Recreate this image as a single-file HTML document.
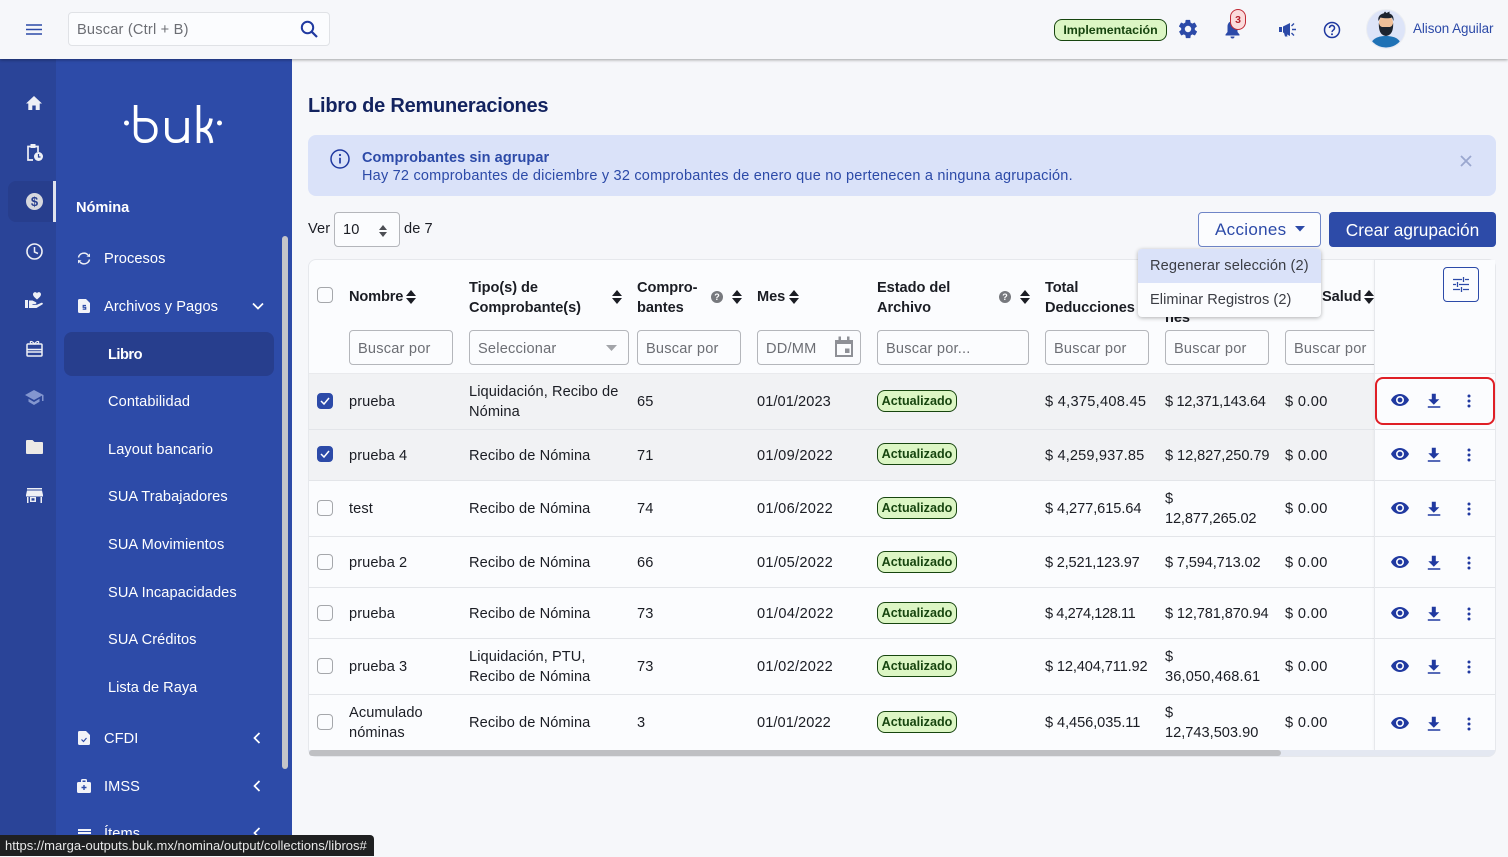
<!DOCTYPE html>
<html lang="es"><head><meta charset="utf-8"><title>Libro de Remuneraciones</title>
<style>
*{box-sizing:border-box}
html,body{margin:0;padding:0;width:1508px;height:856px;overflow:hidden;background:#f6f7fa;font-family:"Liberation Sans",sans-serif;color:#1b1d24;font-size:14.6px}
.a{position:absolute}
.t{position:absolute;white-space:nowrap;line-height:20px;margin-top:1px;letter-spacing:.08px}
.w{color:#fff}
.b{font-weight:700;letter-spacing:-.05px}
.in{position:absolute;top:330px;height:35px;border:1px solid #b4b6bb;border-radius:4px;background:#fbfcfe;color:#6c6e74;padding:8px 8px 0;line-height:20px;white-space:nowrap;letter-spacing:.2px}
.row{position:absolute;left:309px;width:1066px;border-bottom:1px solid #e3e5e9}
.cb{position:absolute;left:317px;width:16px;height:16px;border:1px solid #a5a7ab;border-radius:4px;background:#fbfcfe}
.cb.on{background:#2c4aa8;border-color:#2c4aa8}
.tag{position:absolute;left:877px;width:80px;height:22px;border:1px solid #17450f;border-radius:8px;background:#dcf6c4;color:#17450f;font-weight:700;font-size:12.6px;line-height:20px;text-align:center}
.sort{position:absolute;width:10px;height:14px}
.ic{position:absolute}
</style></head><body>

<!-- main background -->
<div class="a" style="left:292px;top:59px;width:1216px;height:797px;background:#f6f7fa"></div>

<!-- top bar -->
<div class="a" style="left:0;top:0;width:1508px;height:59px;background:#f6f7fa;box-shadow:0 1px 3px rgba(0,0,0,.35);z-index:5">
  <svg class="ic" style="left:26px;top:24px" width="16" height="11" viewBox="0 0 16 11"><path d="M0 1h16M0 5.500h16M0 10h16" stroke="#2c4aa8" stroke-width="1.500"/></svg>
  <div class="a" style="left:68px;top:12px;width:262px;height:34px;border:1px solid #e0e2e6;border-radius:4px;background:#fbfcfe"></div>
  <div class="t" style="left:77px;top:19px;color:#6c6e74;letter-spacing:.2px">Buscar (Ctrl + B)</div>
  <svg class="ic" style="left:300px;top:20px" width="18" height="18" viewBox="0 0 18 18"><circle cx="7.500" cy="7.500" r="5.700" fill="none" stroke="#2039a0" stroke-width="2"/><path d="M11.800 11.800L17 17" stroke="#2039a0" stroke-width="2.200"/></svg>

  <div class="a" style="left:1054px;top:19px;width:113px;height:22px;border:1px solid #17450f;border-radius:8px;background:#dcf6c4;color:#17450f;font-weight:700;font-size:12.4px;line-height:20px;text-align:center">Implementación</div>
  <svg class="ic" style="left:1177px;top:18px" width="22" height="22" viewBox="0 0 24 24"><path fill="#2c4aa8" d="M19.400 13c.1-.3.1-.7.1-1s0-.7-.1-1l2.100-1.600c.2-.2.2-.4.100-.6l-2-3.500c-.1-.2-.4-.3-.6-.2l-2.500 1c-.5-.4-1.100-.7-1.700-1l-.4-2.600c0-.3-.2-.5-.5-.5h-4c-.3 0-.5.2-.5.500l-.4 2.600c-.6.300-1.200.6-1.700 1l-2.500-1c-.2-.1-.5 0-.6.2l-2 3.500c-.1.200-.1.400.1.600L4.600 11c-.1.300-.1.700-.1 1s0 .7.100 1l-2.100 1.600c-.2.200-.2.400-.1.600l2 3.500c.1.200.4.300.6.200l2.500-1c.5.400 1.100.7 1.700 1l.4 2.600c0 .3.200.5.500.5h4c.3 0 .5-.2.5-.5l.4-2.600c.6-.3 1.200-.6 1.700-1l2.500 1c.2.100.5 0 .6-.2l2-3.500c.1-.2.100-.4-.1-.6L19.400 13zM12 15.500a3.500 3.500 0 1 1 0-7 3.500 3.500 0 0 1 0 7z"/></svg>
  <svg class="ic" style="left:1224px;top:20px" width="17" height="19" viewBox="0 0 17 19"><path fill="#2c4aa8" d="M8.500 1c-3 0-5 2.500-5 5.500V12L1.500 14.500v1h14v-1L13.500 12V6.500c0-3-2-5.500-5-5.500zM6.500 16.500a2 2 0 0 0 4 0z"/></svg>
  <div class="a" style="left:1230px;top:9px;width:16px;height:21px;border:1px solid #c02a35;border-radius:8px;background:#fbdcdc;color:#b3202c;font-weight:700;font-size:10.500px;line-height:20px;text-align:center">3</div>
  <svg class="ic" style="left:1279px;top:22px" width="18" height="15" viewBox="0 0 18 15"><path fill="#2c4aa8" d="M0 5h3v5H0zM4 4.500L11 1v13L4 10.500zM5 11h2.500l1 3.500H6z"/><path d="M13 7.500h4M12.500 4l2.500-2.500M12.500 11l2.500 2.500" stroke="#2c4aa8" stroke-width="1.400" fill="none"/></svg>
  <svg class="ic" style="left:1323px;top:21px" width="18" height="18" viewBox="0 0 18 18"><circle cx="9" cy="9" r="7.500" fill="none" stroke="#2039a0" stroke-width="1.500"/><path d="M6.500 7a2.500 2.500 0 1 1 3.800 2.100c-.9.600-1.300 1-1.300 2" fill="none" stroke="#2039a0" stroke-width="1.500"/><circle cx="9" cy="13.200" r="1" fill="#2039a0"/></svg>
  <svg class="ic" style="left:1366px;top:9px" width="40" height="40" viewBox="0 0 40 40"><circle cx="20" cy="20" r="19.500" fill="#dde4f8" stroke="#eceef2"/><clipPath id="c"><circle cx="20" cy="20" r="18.500"/></clipPath><g clip-path="url(#c)"><path fill="#1f72b5" d="M4 40c0-9 6-13 16-13s16 4 16 13z"/><ellipse cx="20" cy="14" rx="7" ry="8" fill="#f0c09a"/><path fill="#1d2430" d="M12.800 14c0 7 1 12 7.200 13 6.200-1 7.200-6 7.200-13-1 3-2 4-4 4h-6.400c-2 0-3-1-4-4z"/><path fill="#1d2430" d="M12.500 12c-1-4 1.500-7 5-7.500l1.500-2 1.500 1.500 3-1.500 0 2c3 1 4.500 3.500 4 7.500l-1.500-3.500c-3 1-7 1-11.500 0z"/></g></svg>
  <div class="t" style="left:1413px;top:18px;color:#2c4aa8;font-size:13.400px;letter-spacing:-.05px">Alison Aguilar</div>
</div>

<!-- rail -->
<div class="a" style="left:0;top:59px;width:56px;height:797px;background:#2a4498"></div>
<div class="a" style="left:56px;top:59px;width:236px;height:797px;background:#2d4ba8"></div>
<div class="a" style="left:8px;top:181px;width:48px;height:41px;background:#273e8d;border-radius:8px 0 0 8px"></div>
<div class="a" style="left:53px;top:181px;width:3px;height:41px;background:#dfe3ee"></div>

<svg class="ic" style="left:26px;top:95px" width="16" height="16" viewBox="0 0 16 16"><path fill="#eef0f6" d="M8 1L0 8.500h2.300V15h4V10.500h3.400V15h4V8.500H16z"/></svg>
<svg class="ic" style="left:26px;top:143px" width="18" height="19" viewBox="0 0 18 19"><path fill="none" stroke="#eef0f6" stroke-width="1.700" d="M7 17H2V3.500h10V9"/><rect x="4.500" y="1" width="5" height="4" fill="#eef0f6"/><circle cx="12.500" cy="13.500" r="4.500" fill="#eef0f6"/><path d="M12.500 11v3h2" stroke="#2a4498" stroke-width="1.200" fill="none"/></svg>
<svg class="ic" style="left:26px;top:193px" width="17" height="17" viewBox="0 0 17 17"><circle cx="8.500" cy="8.500" r="8.500" fill="#d6d8de"/></svg>
<div class="t b" style="left:26px;top:191px;width:17px;text-align:center;color:#273e8d;font-size:13px">$</div>
<svg class="ic" style="left:26px;top:243px" width="17" height="17" viewBox="0 0 17 17"><circle cx="8.500" cy="8.500" r="7.500" fill="none" stroke="#eef0f6" stroke-width="1.600"/><path d="M8.500 4v5l3.500 1.500" fill="none" stroke="#eef0f6" stroke-width="1.500"/></svg>
<svg class="ic" style="left:25px;top:291px" width="18" height="18" viewBox="0 0 18 18"><path fill="#eef0f6" d="M12 8.500C9.500 6.500 8 5 8 3.300 8 1 11 .200 12 2.300 13 .200 16 1 16 3.300 16 5 14.500 6.500 12 8.500zM0 9h3v8H0zM4 9.500h3.500l3 1.500c1.500.5 1 2-.2 2H7.500v.8h4.500l4.500-2c1.300-.400 1.800 1 .8 1.700L11.500 17H4z"/></svg>
<svg class="ic" style="left:26px;top:340px" width="17" height="17" viewBox="0 0 17 17"><rect x="1" y="4" width="15" height="12" rx="1" fill="none" stroke="#eef0f6" stroke-width="1.500"/><path d="M1 9.500h15M1 12h15" stroke="#eef0f6" stroke-width="1.500"/><path d="M8.500 4C6 .5 3.500 1 4.500 3c.5 1 2.500 1 4 1zM8.500 4C11 .5 13.500 1 12.500 3c-.5 1-2.500 1-4 1z" fill="none" stroke="#eef0f6" stroke-width="1.200"/></svg>
<svg class="ic" style="left:25px;top:390px" width="19" height="15" viewBox="0 0 19 15"><path fill="#8396cf" d="M9 0L0 5l9 5 8-4.400V11h1.500V5zM3.500 8.800v3L9 15l5.500-3.200v-3L9 12z"/></svg>
<svg class="ic" style="left:26px;top:440px" width="17" height="14" viewBox="0 0 17 14"><path fill="#eceae6" d="M1 0h5.500l2 2H16a1 1 0 0 1 1 1v10a1 1 0 0 1-1 1H1a1 1 0 0 1-1-1V1a1 1 0 0 1 1-1z"/></svg>
<svg class="ic" style="left:26px;top:488px" width="17" height="15" viewBox="0 0 17 15"><path fill="#eef0f6" d="M1 0h15v1.500H1zM1 2.500h15L17 7v1.500H0V7zM1 9h1.500v6H1zM14.500 9H16v6h-1.500zM4 9h6v5H4zM5.500 10.200v2.400h3v-2.400z"/></svg>

<!-- logo -->
<svg class="ic" style="left:120px;top:100px" width="108" height="46" viewBox="0 0 108 46"><circle cx="6.500" cy="23" r="2.500" fill="#fff"/><circle cx="99.500" cy="23" r="2.500" fill="#fff"/><path d="M15.600 5V33a8.200 8.200 0 0 0 8.200 8.200h2a10 10 0 0 0 10-10v-1.400a10 10 0 0 0-10-10H15.600" fill="none" stroke="#fff" stroke-width="3.600"/><path d="M46.800 18V33a8.200 8.200 0 0 0 8.200 8.200h2a10 10 0 0 0 10-10V18M67 31V43" fill="none" stroke="#fff" stroke-width="3.600"/><path d="M78.500 5V43M78.500 30h2c6 0 9.500-4 10.500-11.500M80.500 30c6 0 10 4 11 13" fill="none" stroke="#fff" stroke-width="3.600"/></svg>

<!-- nav -->
<div class="t w b" style="left:76px;top:197px">Nómina</div>
<svg class="ic" style="left:77px;top:252px" width="14" height="13" viewBox="0 0 14 13"><path d="M1.500 5.500A5.500 5.500 0 0 1 11 3M12.500 7.500A5.500 5.500 0 0 1 3 10" fill="none" stroke="#eef0f6" stroke-width="1.500"/><path fill="#eef0f6" d="M9.500 4.500L13 5V1.500zM4.500 8.500L1 8v3.500z"/></svg>
<div class="t w" style="left:104px;top:248px">Procesos</div>
<svg class="ic" style="left:78px;top:299px" width="12" height="14" viewBox="0 0 12 14"><path fill="#f2f3f8" d="M1.500 0H8l4 4v8.500a1.500 1.500 0 0 1-1.500 1.500h-9A1.500 1.500 0 0 1 0 12.500v-11A1.500 1.500 0 0 1 1.500 0z"/><path d="M8 6.500H5.200v1.800h2.500v1.800H4.700" fill="none" stroke="#2d4ba8" stroke-width="1.200"/></svg>
<div class="t w" style="left:104px;top:296px">Archivos y Pagos</div>
<svg class="ic" style="left:252px;top:302px" width="12" height="8" viewBox="0 0 12 8"><path d="M1 1.500l5 5 5-5" fill="none" stroke="#fff" stroke-width="1.700"/></svg>
<div class="a" style="left:64px;top:332px;width:210px;height:44px;background:#273e8d;border-radius:8px"></div>
<div class="t w b" style="left:108px;top:344px;letter-spacing:-.5px">Libro</div>
<div class="t w" style="left:108px;top:391px">Contabilidad</div>
<div class="t w" style="left:108px;top:439px">Layout bancario</div>
<div class="t w" style="left:108px;top:486px">SUA Trabajadores</div>
<div class="t w" style="left:108px;top:534px">SUA Movimientos</div>
<div class="t w" style="left:108px;top:582px">SUA Incapacidades</div>
<div class="t w" style="left:108px;top:629px">SUA Créditos</div>
<div class="t w" style="left:108px;top:677px;letter-spacing:0">Lista de Raya</div>
<svg class="ic" style="left:78px;top:731px" width="12" height="14" viewBox="0 0 12 14"><path fill="#f2f3f8" d="M1.500 0H8l4 4v8.500a1.500 1.500 0 0 1-1.500 1.500h-9A1.500 1.500 0 0 1 0 12.500v-11A1.500 1.500 0 0 1 1.500 0z"/><path d="M3.500 8.500l2 2 3-3.500" fill="none" stroke="#2d4ba8" stroke-width="1.200"/></svg>
<div class="t w" style="left:104px;top:728px">CFDI</div>
<svg class="ic" style="left:253px;top:732px" width="8" height="12" viewBox="0 0 8 12"><path d="M6.500 1l-5 5 5 5" fill="none" stroke="#fff" stroke-width="1.700"/></svg>
<svg class="ic" style="left:77px;top:779px" width="14" height="14" viewBox="0 0 14 14"><path fill="#f2f3f8" d="M4 3V1.500A1.500 1.500 0 0 1 5.500 0h3A1.500 1.500 0 0 1 10 1.500V3h2.500A1.500 1.500 0 0 1 14 4.500v8a1.500 1.500 0 0 1-1.500 1.500h-11A1.500 1.500 0 0 1 0 12.500v-8A1.500 1.500 0 0 1 1.500 3zM5.500 1.500V3h3V1.500z"/><path d="M7 6v5M4.500 8.500h5" stroke="#2d4ba8" stroke-width="1.400"/></svg>
<div class="t w" style="left:104px;top:776px">IMSS</div>
<svg class="ic" style="left:253px;top:780px" width="8" height="12" viewBox="0 0 8 12"><path d="M6.500 1l-5 5 5 5" fill="none" stroke="#fff" stroke-width="1.700"/></svg>
<div class="a" style="left:78px;top:829px;width:13px;height:6px;background:repeating-linear-gradient(#f2f3f8 0 2px,transparent 2px 3px)"></div>
<div class="t w" style="left:104px;top:823px">Ítems</div>
<svg class="ic" style="left:253px;top:827px" width="8" height="12" viewBox="0 0 8 12"><path d="M6.500 1l-5 5 5 5" fill="none" stroke="#fff" stroke-width="1.700"/></svg>
<div class="a" style="left:282px;top:236px;width:6px;height:533px;background:#c4c5c9;border-radius:3px"></div>

<!-- status tooltip -->
<div class="a" style="left:0;top:835px;width:374px;height:21px;background:#1f2021;border-radius:0 4px 0 0;color:#e8e8e8;font-size:13px;letter-spacing:.02px;line-height:22px;padding-left:5px;white-space:nowrap;z-index:8">https://marga-outputs.buk.mx/nomina/output/collections/libros#</div>

<!-- heading -->
<div class="t b" style="left:308px;top:93px;font-size:20px;line-height:24px;color:#13235f;letter-spacing:-.23px">Libro de Remuneraciones</div>

<!-- alert -->
<div class="a" style="left:308px;top:135px;width:1188px;height:61px;background:#dae2f9;border-radius:8px"></div>
<svg class="ic" style="left:330px;top:149px" width="20" height="20" viewBox="0 0 20 20"><circle cx="10" cy="10" r="9" fill="none" stroke="#2039a0" stroke-width="1.500"/><circle cx="10" cy="6" r="1.100" fill="#2039a0"/><path d="M10 8.800v5.700" stroke="#2039a0" stroke-width="1.700"/></svg>
<div class="t b" style="left:362px;top:147px;color:#2c4aa8;font-size:14.500px;letter-spacing:.08px">Comprobantes sin agrupar</div>
<div class="t" style="left:362px;top:165px;color:#2c4aa8;font-size:14.500px;letter-spacing:.21px">Hay 72 comprobantes de diciembre y 32 comprobantes de enero que no pertenecen a ninguna agrupación.</div>
<svg class="ic" style="left:1460px;top:155px" width="12" height="12" viewBox="0 0 12 12"><path d="M1 1l10 10M11 1L1 11" stroke="#9aa7cf" stroke-width="1.800"/></svg>

<!-- toolbar -->
<div class="t" style="left:308px;top:218px">Ver</div>
<div class="a" style="left:334px;top:212px;width:66px;height:35px;border:1px solid #b4b6bb;border-radius:4px;background:#fbfcfe"></div>
<div class="t" style="left:343px;top:219px">10</div>
<svg class="sort" style="left:378px;top:224px" viewBox="0 0 10 14" width="10" height="11"><path fill="#4c4e54" d="M5 1l4 5H1zM5 13L1 8h8z"/></svg>
<div class="t" style="left:404px;top:218px">de 7</div>

<div class="a" style="left:1198px;top:212px;width:123px;height:35px;border:1px solid #6f85c7;border-radius:4px;background:#fbfcfe"></div>
<div class="t" style="left:1215px;top:219px;color:#2c4aa8;font-size:17px;letter-spacing:.3px">Acciones</div>
<svg class="ic" style="left:1295px;top:226px" width="10" height="6" viewBox="0 0 10 6"><path fill="#2c4aa8" d="M0 0h10L5 5.500z"/></svg>
<div class="a" style="left:1329px;top:212px;width:167px;height:35px;background:#2d4ba8;border-radius:4px;color:#fff;font-size:17.300px;line-height:36px;text-align:center">Crear agrupación</div>

<!-- table card -->
<div class="a" style="left:308px;top:259px;width:1188px;height:498px;background:#fbfcfe;border:1px solid #e6e8ec;border-radius:8px"></div>

<!-- rows -->
<div class="row" style="top:373px;height:57px;background:#f1f2f4;border-top:1px solid #e9eaed"></div>
<div class="row" style="top:430px;height:51px;background:#f1f2f4"></div>
<div class="row" style="top:481px;height:56px"></div>
<div class="row" style="top:537px;height:51px"></div>
<div class="row" style="top:588px;height:51px"></div>
<div class="row" style="top:639px;height:56px"></div>

<!-- headers -->
<div class="cb" style="top:287px"></div>
<div class="t b" style="left:349px;top:286px;letter-spacing:-.15px">Nombre</div>
<svg class="sort" style="left:406px;top:290px" viewBox="0 0 10 14"><path fill="#1b1d24" d="M5 0l5 6H0zM5 14L0 8h10z"/></svg>
<div class="t b" style="left:469px;top:277px">Tipo(s) de<br>Comprobante(s)</div>
<svg class="sort" style="left:612px;top:290px" viewBox="0 0 10 14"><path fill="#1b1d24" d="M5 0l5 6H0zM5 14L0 8h10z"/></svg>
<div class="t b" style="left:637px;top:277px">Compro-<br>bantes</div>
<div class="a" style="left:711px;top:291px;width:12px;height:12px;border-radius:50%;background:#77797e;color:#fff;font-size:9px;line-height:12px;text-align:center;font-weight:700">?</div>
<svg class="sort" style="left:732px;top:290px" viewBox="0 0 10 14"><path fill="#1b1d24" d="M5 0l5 6H0zM5 14L0 8h10z"/></svg>
<div class="t b" style="left:757px;top:286px">Mes</div>
<svg class="sort" style="left:789px;top:290px" viewBox="0 0 10 14"><path fill="#1b1d24" d="M5 0l5 6H0zM5 14L0 8h10z"/></svg>
<div class="t b" style="left:877px;top:277px">Estado del<br>Archivo</div>
<div class="a" style="left:999px;top:291px;width:12px;height:12px;border-radius:50%;background:#77797e;color:#fff;font-size:9px;line-height:12px;text-align:center;font-weight:700">?</div>
<svg class="sort" style="left:1020px;top:290px" viewBox="0 0 10 14"><path fill="#1b1d24" d="M5 0l5 6H0zM5 14L0 8h10z"/></svg>
<div class="t b" style="left:1045px;top:277px;letter-spacing:-.1px">Total<br>Deducciones</div>
<div class="t b" style="left:1165px;top:307px">nes</div>
<div class="t b" style="left:1322px;top:286px">Salud</div>
<svg class="sort" style="left:1364px;top:290px" viewBox="0 0 10 14"><path fill="#1b1d24" d="M5 0l5 6H0zM5 14L0 8h10z"/></svg>

<!-- filters -->
<div class="in" style="left:349px;width:104px">Buscar por</div>
<div class="in" style="left:469px;width:160px">Seleccionar</div>
<svg class="ic" style="left:606px;top:345px" width="11" height="6" viewBox="0 0 11 6"><path fill="#a2a4a9" d="M0 0h11L5.500 6z"/></svg>
<div class="in" style="left:637px;width:104px">Buscar por</div>
<div class="in" style="left:757px;width:104px">DD/MM</div>
<svg class="ic" style="left:835px;top:336px" width="18" height="21" viewBox="0 0 18 21"><path fill="none" stroke="#8e9096" stroke-width="2" d="M1 5h16v15H1z"/><path fill="#8e9096" d="M1 4h16v4H1zM3.500 0.500h2.500v4H3.500zM12 .5h2.500v4H12zM10 12.500h4.500v4.500H10z"/></svg>
<div class="in" style="left:877px;width:152px">Buscar por...</div>
<div class="in" style="left:1045px;width:104px">Buscar por</div>
<div class="in" style="left:1165px;width:104px">Buscar por</div>
<div class="in" style="left:1285px;width:104px">Buscar por</div>

<!-- row content: 1 -->
<div class="cb on" style="top:393px"></div><svg class="ic" style="left:320px;top:396px" width="10" height="10" viewBox="0 0 10 10"><path d="M1 5l3 3 5-6" fill="none" stroke="#fff" stroke-width="1.500"/></svg>
<div class="t" style="left:349px;top:391px">prueba</div>
<div class="t" style="left:469px;top:381px">Liquidación, Recibo de<br>Nómina</div>
<div class="t" style="left:637px;top:391px">65</div>
<div class="t" style="left:757px;top:391px">01/01/2023</div>
<div class="tag" style="top:390px">Actualizado</div>
<div class="t" style="left:1045px;top:391px;letter-spacing:.28px">$ 4,375,408.45</div>
<div class="t" style="left:1165px;top:391px;letter-spacing:-.33px">$ 12,371,143.64</div>
<div class="t" style="left:1285px;top:391px;letter-spacing:.35px">$ 0.00</div>

<!-- row 2 -->
<div class="cb on" style="top:446px"></div><svg class="ic" style="left:320px;top:449px" width="10" height="10" viewBox="0 0 10 10"><path d="M1 5l3 3 5-6" fill="none" stroke="#fff" stroke-width="1.500"/></svg>
<div class="t" style="left:349px;top:445px">prueba 4</div>
<div class="t" style="left:469px;top:445px">Recibo de Nómina</div>
<div class="t" style="left:637px;top:445px">71</div>
<div class="t" style="left:757px;top:445px;letter-spacing:.3px">01/09/2022</div>
<div class="tag" style="top:443px">Actualizado</div>
<div class="t" style="left:1045px;top:445px;letter-spacing:.14px">$ 4,259,937.85</div>
<div class="t" style="left:1165px;top:445px;letter-spacing:-.07px">$ 12,827,250.79</div>
<div class="t" style="left:1285px;top:445px;letter-spacing:.35px">$ 0.00</div>

<!-- row 3 -->
<div class="cb" style="top:500px"></div>
<div class="t" style="left:349px;top:498px">test</div>
<div class="t" style="left:469px;top:498px">Recibo de Nómina</div>
<div class="t" style="left:637px;top:498px">74</div>
<div class="t" style="left:757px;top:498px;letter-spacing:.3px">01/06/2022</div>
<div class="tag" style="top:497px">Actualizado</div>
<div class="t" style="left:1045px;top:498px;letter-spacing:-.07px">$ 4,277,615.64</div>
<div class="t" style="left:1165px;top:488px;letter-spacing:-.15px">$<br>12,877,265.02</div>
<div class="t" style="left:1285px;top:498px;letter-spacing:.35px">$ 0.00</div>

<!-- row 4 -->
<div class="cb" style="top:554px"></div>
<div class="t" style="left:349px;top:552px">prueba 2</div>
<div class="t" style="left:469px;top:552px">Recibo de Nómina</div>
<div class="t" style="left:637px;top:552px">66</div>
<div class="t" style="left:757px;top:552px;letter-spacing:.3px">01/05/2022</div>
<div class="tag" style="top:551px">Actualizado</div>
<div class="t" style="left:1045px;top:552px;letter-spacing:-.2px">$ 2,521,123.97</div>
<div class="t" style="left:1165px;top:552px;letter-spacing:-.14px">$ 7,594,713.02</div>
<div class="t" style="left:1285px;top:552px;letter-spacing:.35px">$ 0.00</div>

<!-- row 5 -->
<div class="cb" style="top:605px"></div>
<div class="t" style="left:349px;top:603px">prueba</div>
<div class="t" style="left:469px;top:603px">Recibo de Nómina</div>
<div class="t" style="left:637px;top:603px">73</div>
<div class="t" style="left:757px;top:603px;letter-spacing:.35px">01/04/2022</div>
<div class="tag" style="top:602px">Actualizado</div>
<div class="t" style="left:1045px;top:603px;letter-spacing:-.43px">$ 4,274,128.11</div>
<div class="t" style="left:1165px;top:603px;letter-spacing:-.13px">$ 12,781,870.94</div>
<div class="t" style="left:1285px;top:603px;letter-spacing:.35px">$ 0.00</div>

<!-- row 6 -->
<div class="cb" style="top:658px"></div>
<div class="t" style="left:349px;top:656px">prueba 3</div>
<div class="t" style="left:469px;top:646px">Liquidación, PTU,<br>Recibo de Nómina</div>
<div class="t" style="left:637px;top:656px">73</div>
<div class="t" style="left:757px;top:656px;letter-spacing:.3px">01/02/2022</div>
<div class="tag" style="top:655px">Actualizado</div>
<div class="t" style="left:1045px;top:656px;letter-spacing:-.13px">$ 12,404,711.92</div>
<div class="t" style="left:1165px;top:646px;letter-spacing:.15px">$<br>36,050,468.61</div>
<div class="t" style="left:1285px;top:656px;letter-spacing:.35px">$ 0.00</div>

<!-- row 7 -->
<div class="cb" style="top:714px"></div>
<div class="t" style="left:349px;top:702px">Acumulado<br>nóminas</div>
<div class="t" style="left:469px;top:712px">Recibo de Nómina</div>
<div class="t" style="left:637px;top:712px">3</div>
<div class="t" style="left:757px;top:712px">01/01/2022</div>
<div class="tag" style="top:711px">Actualizado</div>
<div class="t" style="left:1045px;top:712px;letter-spacing:-.07px">$ 4,456,035.11</div>
<div class="t" style="left:1165px;top:702px;letter-spacing:0">$<br>12,743,503.90</div>
<div class="t" style="left:1285px;top:712px;letter-spacing:.35px">$ 0.00</div>

<!-- sticky actions column -->
<div class="a" style="left:1374px;top:260px;width:121px;height:490px;background:#fbfcfe;border-left:1px solid #e6e8ec;box-shadow:-1px 0 2px rgba(0,0,0,.03)"></div>
<div class="a" style="left:1375px;top:373px;width:120px;height:1px;background:#e9eaed"></div>
<div class="a" style="left:1375px;top:429px;width:120px;height:1px;background:#e3e5e9"></div>
<div class="a" style="left:1375px;top:480px;width:120px;height:1px;background:#e3e5e9"></div>
<div class="a" style="left:1375px;top:536px;width:120px;height:1px;background:#e3e5e9"></div>
<div class="a" style="left:1375px;top:587px;width:120px;height:1px;background:#e3e5e9"></div>
<div class="a" style="left:1375px;top:638px;width:120px;height:1px;background:#e3e5e9"></div>
<div class="a" style="left:1375px;top:694px;width:120px;height:1px;background:#e3e5e9"></div>
<div class="a" style="left:1443px;top:267px;width:36px;height:35px;border:1px solid #2c4aa8;border-radius:4px"></div>
<svg class="ic" style="left:1453px;top:277px" width="16" height="15" viewBox="0 0 16 15"><path d="M0 2.500h9M12 2.500h4M0 7.500h3M6 7.500h10M0 12.500h7M10 12.500h6M10.500 0v5M4.500 5v5M8.500 10v5" stroke="#2c4aa8" stroke-width="1.300" fill="none"/></svg>

<!-- action icons -->
<svg width="0" height="0" style="position:absolute"><defs>
<g id="acts"><path fill="#2039a0" d="M9 0C5 0 1.600 2.500 0 6c1.600 3.500 5 6 9 6s7.400-2.500 9-6c-1.600-3.500-5-6-9-6zm0 10a4 4 0 1 1 0-8 4 4 0 0 1 0 8zm0-6.400a2.400 2.400 0 1 0 0 4.800 2.400 2.400 0 0 0 0-4.800z"/><path fill="#2039a0" transform="translate(1.300 .8)" d="M39.500-1h4v5.500H47L41.500 10 36 4.500h3.500zM35.500 11.500h12.500v1.500H35.500z"/><circle cx="78" cy="2" r="1.500" fill="#2039a0"/><circle cx="78" cy="7" r="1.500" fill="#2039a0"/><circle cx="78" cy="12" r="1.500" fill="#2039a0"/></g>
</defs></svg>
<svg class="ic" style="left:1391px;top:394px;overflow:visible" width="90" height="14"><use href="#acts"/></svg>
<svg class="ic" style="left:1391px;top:448px;overflow:visible" width="90" height="14"><use href="#acts"/></svg>
<svg class="ic" style="left:1391px;top:502px;overflow:visible" width="90" height="14"><use href="#acts"/></svg>
<svg class="ic" style="left:1391px;top:556px;overflow:visible" width="90" height="14"><use href="#acts"/></svg>
<svg class="ic" style="left:1391px;top:607px;overflow:visible" width="90" height="14"><use href="#acts"/></svg>
<svg class="ic" style="left:1391px;top:660px;overflow:visible" width="90" height="14"><use href="#acts"/></svg>
<svg class="ic" style="left:1391px;top:717px;overflow:visible" width="90" height="14"><use href="#acts"/></svg>
<div class="a" style="left:1375px;top:377px;width:120px;height:48px;border:2px solid #df1f26;border-radius:8px"></div>

<!-- scrollbar -->
<div class="a" style="left:309px;top:750px;width:1186px;height:6px;background:#e4e8f1;border-radius:0 0 7px 7px"></div>
<div class="a" style="left:309px;top:750px;width:972px;height:6px;background:#bfc0c3;border-radius:3px"></div>

<!-- dropdown -->
<div class="a" style="left:1138px;top:249px;width:183px;height:68px;background:#fbfcfe;border-radius:4px;box-shadow:0 1px 4px rgba(0,0,0,.3);overflow:hidden;z-index:4">
  <div style="height:34px;background:#dae2f9;color:#3b3d44;line-height:34px;padding-left:12px;white-space:nowrap;letter-spacing:.13px">Regenerar selección (2)</div>
  <div style="height:34px;color:#3b3d44;line-height:34px;padding-left:12px;white-space:nowrap;letter-spacing:.05px">Eliminar Registros (2)</div>
</div>
</body></html>
